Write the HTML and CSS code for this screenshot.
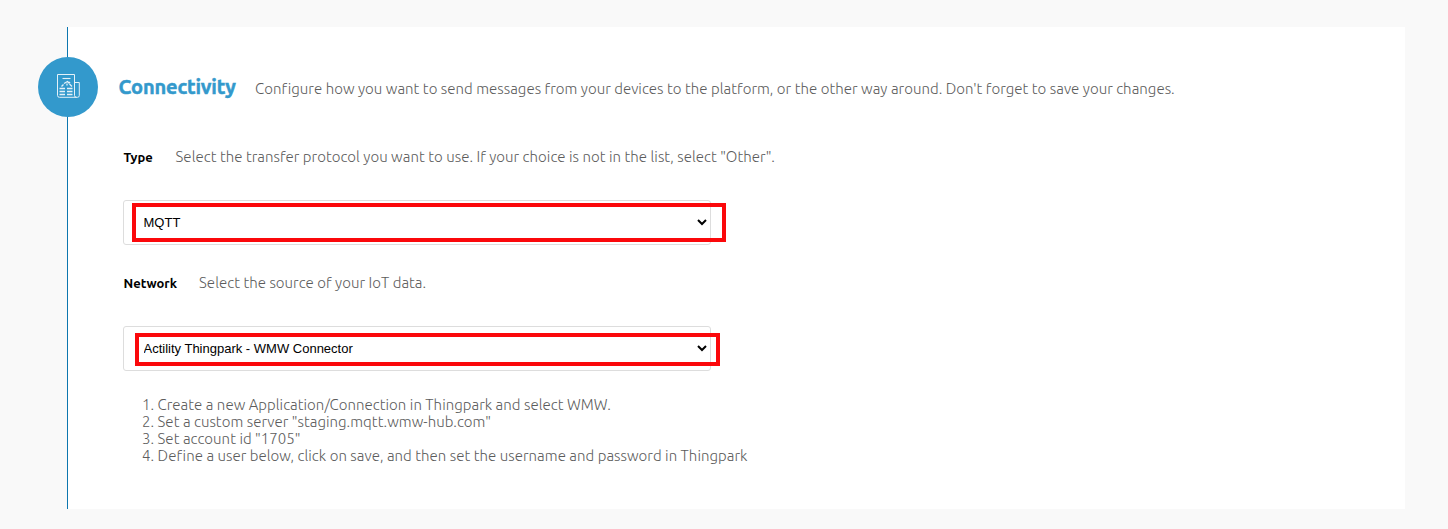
FILE: index.html
```
<!DOCTYPE html>
<html lang="en">
<head>
<meta charset="utf-8">
<title>Connectivity</title>
<link rel="stylesheet" href="styles.css">
</head>
<body>
<main class="card">
  <div class="step-icon">
    <svg width="24" height="26" viewBox="0 0 24 26" fill="none" stroke="#e4f1f8" stroke-width="1" stroke-linejoin="round">
      <path d="M18.500 9.500H23.300V22.500Q23.300 24.300 21.500 24.300H3.500Q1.500 24.300 1.500 22.500V1.500H18.500V22.500Q18.500 24.300 20.500 24.300"/>
      <path d="M6.500 5.500H14.500" stroke-width="1.1"/>
      <path d="M5.500 13.500L7.500 11.500M8 10.500L11.500 8.500L13 10L14 9M11 10.500V12.500M13.500 11L16 13.500" stroke-width="1.300"/>
      <path d="M3.500 15.500H9M3.500 18.500H9M3.500 21.500H9M11 15.500H16.500M11 18.500H16.500M11 21.500H16.500" stroke-width="1.300"/>
    </svg>
  </div>
  <header class="heading">
    <h1 class="title">Connectivity</h1>
    <p class="text intro">Configure how you want to send messages from your devices to the platform, or the other way around. Don't forget to save your changes.</p>
  </header>
  <section class="field">
    <div class="caption">
      <label class="label label-type" for="type">Type</label>
      <p class="text">Select the transfer protocol you want to use. If your choice is not in the list, select "Other".</p>
    </div>
    <div class="control">
      <select class="select" id="type"><option>MQTT</option></select>
      <span class="highlight highlight-type"></span>
    </div>
  </section>
  <section class="field">
    <div class="caption">
      <label class="label label-network" for="network">Network</label>
      <p class="text">Select the source of your IoT data.</p>
    </div>
    <div class="control">
      <select class="select" id="network"><option>Actility Thingpark - WMW Connector</option></select>
      <span class="highlight highlight-network"></span>
    </div>
  </section>
  <ol class="text steps">
    <li>Create a new Application/Connection in Thingpark and select WMW.</li>
    <li>Set a custom server "staging.mqtt.wmw-hub.com"</li>
    <li>Set account id "1705"</li>
    <li>Define a user below, click on save, and then set the username and password in Thingpark</li>
  </ol>
</main>
</body>
</html>
```
FILE: styles.css
```
* { box-sizing: border-box; }
body {
  margin: 0;
  padding: 27px 43px 20px 67px;
  background: #f9f9f9;
  font-family: Ubuntu, "Open Sans", sans-serif;
}
.card {
  position: relative;
  height: 482px;
  padding: 44px 0 0 55.600px;
  border-left: 1px solid #0d77af;
  background: #fff;
}
.step-icon {
  position: absolute;
  left: -30px;
  top: 30px;
  width: 60px;
  height: 60px;
  display: flex;
  align-items: center;
  justify-content: center;
  border-radius: 50%;
  background: #3399cc;
}
.step-icon svg { margin-bottom: 2px; }
.heading { display: flex; height: 30px; margin-left: -5px; }
.title {
  width: 136.500px;
  margin: 0;
  color: #3399cc;
  font-size: 20px;
  font-weight: 700;
  line-height: 32px;
  letter-spacing: -.15px;
  -webkit-text-stroke: .5px #3399cc;
  white-space: nowrap;
}
.text {
  margin: 0;
  color: #5c5c5c;
  font-size: 15px;
  font-weight: 300;
  line-height: 17px;
  letter-spacing: .036px;
  white-space: nowrap;
}
.intro { padding-top: 9px; }
.field { height: 126px; }
.heading + .field { margin-top: 45px; }
.caption { display: flex; height: 54px; padding-top: 2px; }
.label {
  font-size: 13px;
  font-weight: 700;
  line-height: 19px;
  white-space: nowrap;
}
.label-type { width: 52px; }
.label-network { width: 75.500px; }
.control { position: relative; width: 588px; height: 45px; margin-left: -.6px; }
.select {
  display: block;
  width: 588px;
  height: 45px;
  padding: 0 0 0 15.500px;
  border: 1px solid #ddd;
  border-radius: 3px;
  background: #fff;
  color: #000;
  font: 13px "Liberation Sans", Arial, sans-serif;
}
.highlight { position: absolute; border: 4px solid #fb080b; pointer-events: none; }
.highlight-type { left: 9px; top: 3px; width: 594px; height: 39px; }
.highlight-network { left: 12px; top: 7px; width: 585px; height: 33px; }
.steps { padding-left: 34px; margin-top: -2px; }
```
